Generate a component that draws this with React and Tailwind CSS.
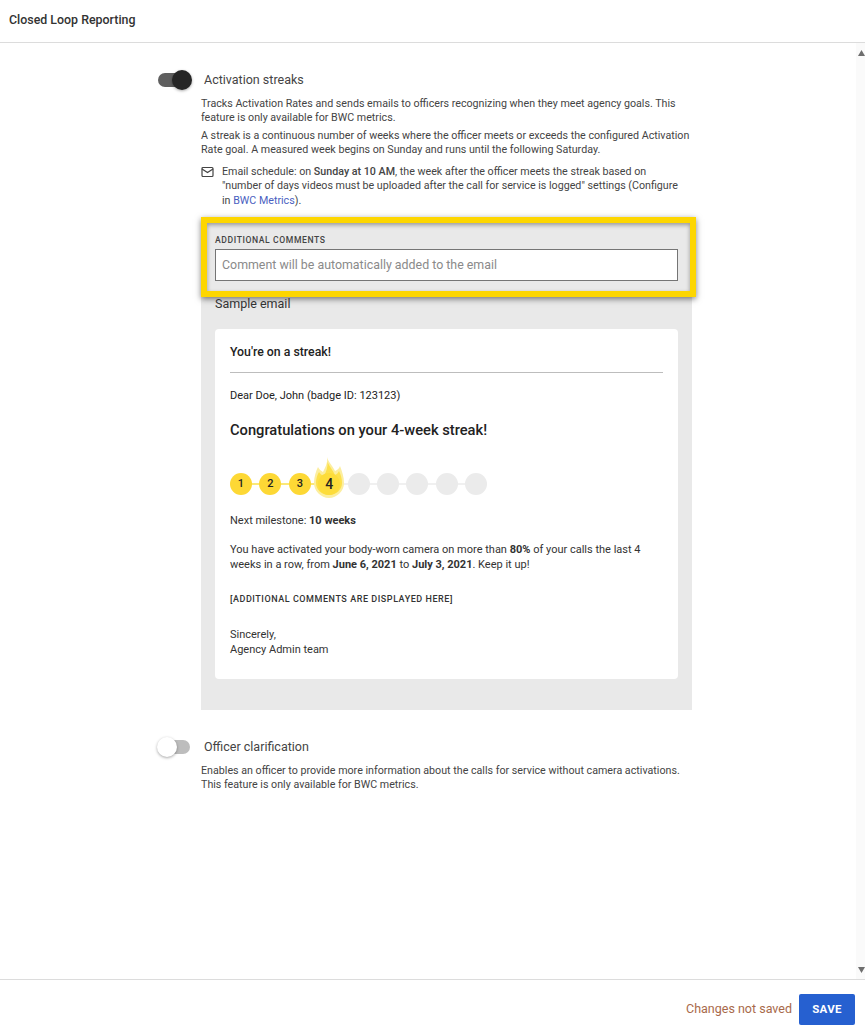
import React from "react";

const STEPS = [1, 2, 3, 4, 5, 6, 7, 8, 9];

function Toggle({ on }) {
  return (
    <div className="relative w-[32px] h-[14px] shrink-0">
      <div className={`w-full h-full rounded-full ${on ? "bg-[#5f5f5f]" : "bg-[#bdbdbd]"}`} />
      <div
        className={`absolute top-[-3px] w-[20px] h-[20px] rounded-full shadow-[0_1px_3px_rgba(0,0,0,0.35)] ${
          on ? "left-[14px] bg-[#262626]" : "left-[-1px] bg-white"
        }`}
      />
    </div>
  );
}

function Flame() {
  return (
    <svg className="absolute left-[-4px] top-[-16px]" width="30" height="41" viewBox="0 0 30 41">
      <path
        d="M13 0C14 5 19 9 21 14C23 13 25 12 26 9C28 14 30 20 30 26C30 34 23 41 15 41C7 41 0 34 0 26C0 20 2 14 4 10C5 12 7 14 9 15C11 11 14 6 13 0Z"
        fill="#fcee9f"
      />
      <path
        d="M13.5 5C15 9 19 13 21 18C23 17 24 16 25 14C27 18 28 22 28 26C28 33 22 38 15 38C8 38 2 33 2 26C2 22 3 18 5 15C6 17 8 18 10 19C12 15 14 10 13.5 5Z"
        fill="#fde04a"
      />
    </svg>
  );
}

function Streak() {
  return (
    <div className="relative flex items-center h-[22px] mt-[34px]">
      <div className="absolute left-[8px] w-[240px] h-[2px] bg-[#f0f0f0]" />
      <div className="absolute left-[8px] w-[80px] h-[2px] bg-[#fbe878]" />
      <div className="relative flex gap-[7.4px]">
        {STEPS.map((n) => (
          <div key={n} className="relative w-[22px] h-[22px]">
            {n === 4 && <Flame />}
            <div
              className={`relative w-[22px] h-[22px] rounded-full flex items-center justify-center font-medium text-[#222] ${
                n === 4 ? "bg-[#fddc3a] text-[14px]" : n < 4 ? "bg-[#fdd835] text-[11px]" : "bg-[#ebebeb] text-[11px]"
              }`}
            >
              {n <= 4 ? n : ""}
            </div>
          </div>
        ))}
      </div>
    </div>
  );
}

export default function App() {
  return (
    <div
      className="w-[865px] h-[1025px] flex flex-col bg-white text-[#333] overflow-hidden"
      style={{ fontFamily: "Roboto, sans-serif" }}
    >
      {/* Header */}
      <div className="h-[43px] shrink-0 border-b border-[#dcdcdc] pl-[9px] pt-[12px] text-[12.4px] font-medium text-[#333] leading-[15px]">
        Closed Loop Reporting
      </div>

      {/* Main */}
      <div className="flex-1 flex min-h-0">
        <div className="flex-1 pl-[158px] pt-[27px]">
          <div className="flex items-center h-[20px]">
            <Toggle on />
            <span className="ml-[14px] text-[12.5px] text-[#444]">Activation streaks</span>
          </div>

          <div className="ml-[43px] w-[495px] text-[10.7px] leading-[14.3px] text-[#444]">
            <p className="mt-[7px] w-[490px]">
              Tracks Activation Rates and sends emails to officers recognizing when they meet agency goals. This feature
              is only available for BWC metrics.
            </p>
            <p className="mt-[3px] w-[490px]">
              A streak is a continuous number of weeks where the officer meets or exceeds the configured Activation Rate
              goal. A measured week begins on Sunday and runs until the following Saturday.
            </p>
            <div className="flex mt-[8px]">
              <svg className="shrink-0 mt-[1px]" width="13" height="12" viewBox="0 0 13 12" fill="none" stroke="#444" strokeWidth="1.2">
                <rect x="1" y="1.5" width="11" height="9" rx="1" />
                <path d="M1 3l5.5 3.5L12 3" />
              </svg>
              <p className="ml-[8px] w-[459px]">
                Email schedule: on <span className="font-medium">Sunday at 10 AM</span>, the week after the officer meets
                the streak based on "number of days videos must be uploaded after the call for service is logged" settings
                (Configure in <span className="text-[#4a5fc1]">BWC Metrics</span>).
              </p>
            </div>

            {/* Sample panel */}
            <div className="mt-[9px] w-[491px] h-[493px] bg-[#e9e9e9]">
              <div className="w-[495px] h-[80px] border-[6px] border-[#fdd600] bg-[#e9e9e9] shadow-[0_2px_6px_rgba(0,0,0,0.5),inset_0_2px_4px_rgba(0,0,0,0.35)] px-[8px] pt-[12px]">
                <div className="text-[8.6px] leading-[11px] font-medium tracking-[0.6px] text-[#444]">ADDITIONAL COMMENTS</div>
                <div className="mt-[3px] w-[463px] h-[32px] bg-white border border-[#757575] pl-[6px] flex items-center text-[12.4px] text-[#8a8a8a]">
                  Comment will be automatically added to the email
                </div>
              </div>

              <div className="pl-[14px] text-[12.5px] leading-[14px] text-[#333]">Sample email</div>

              {/* Email card */}
              <div className="ml-[14px] mt-[18px] w-[463px] h-[350px] bg-white rounded-[4px] px-[15px] text-[#222]">
                <div className="pt-[16px] text-[12.3px] leading-[15px] font-medium">You're on a streak!</div>
                <div className="mt-[12px] h-px bg-[#bdbdbd]" />
                <div className="mt-[16px] text-[11px] leading-[14px]">Dear Doe, John (badge ID: 123123)</div>
                <div className="mt-[18px] text-[14.7px] leading-[18px] font-medium">Congratulations on your 4-week streak!</div>
                <Streak />
                <div className="mt-[19px] text-[11px] leading-[14px] text-[#333]">
                  Next milestone: <span className="font-bold">10 weeks</span>
                </div>
                <p className="mt-[14px] w-[420px] text-[11px] leading-[15px] text-[#333]">
                  You have activated your body-worn camera on more than <span className="font-bold">80%</span> of your calls
                  the last 4 weeks in a row, from <span className="font-bold">June 6, 2021</span> to{" "}
                  <span className="font-bold">July 3, 2021</span>. Keep it up!
                </p>
                <div className="mt-[21px] text-[9px] leading-[12px] font-medium tracking-[0.55px] text-[#333]">
                  [ADDITIONAL COMMENTS ARE DISPLAYED HERE]
                </div>
                <div className="mt-[22px] text-[11px] leading-[15px] text-[#333]">
                  Sincerely,
                  <br />
                  Agency Admin team
                </div>
              </div>
            </div>
          </div>

          <div className="flex items-center h-[20px] mt-[27px]">
            <Toggle />
            <span className="ml-[14px] text-[12.5px] text-[#444]">Officer clarification</span>
          </div>
          <p className="ml-[43px] mt-[7px] w-[490px] text-[10.7px] leading-[14.3px] text-[#444]">
            Enables an officer to provide more information about the calls for service without camera activations. This
            feature is only available for BWC metrics.
          </p>
        </div>

        {/* Scrollbar */}
        <div className="w-[9px] shrink-0 bg-[#fafafa] flex flex-col items-end justify-between pt-[7px] pb-[6px]">
          <svg width="7" height="6" viewBox="0 0 7 6"><path d="M3.5 0L7 6H0z" fill="#6e6e6e" /></svg>
          <svg width="7" height="6" viewBox="0 0 7 6"><path d="M3.5 6L0 0h7z" fill="#6e6e6e" /></svg>
        </div>
      </div>

      {/* Footer */}
      <div className="h-[46px] shrink-0 border-t border-[#dcdcdc] flex items-start justify-end pr-[10px] pt-[14px]">
        <span className="text-[12.5px] leading-[30px] text-[#a8694a] mr-[7px]">Changes not saved</span>
        <button className="w-[56px] h-[31px] bg-[#2660d0] rounded-[2px] text-white text-[11.5px] font-bold tracking-[0.3px]">
          SAVE
        </button>
      </div>
    </div>
  );
}
